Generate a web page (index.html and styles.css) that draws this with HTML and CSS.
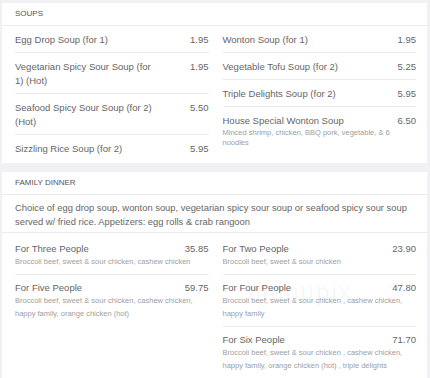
FILE: index.html
```html
<!DOCTYPE html>
<html>
<head>
<meta charset="utf-8">
<link rel="stylesheet" href="styles.css">
</head>
<body>
<div class="page">
  <section class="card soups">
    <div class="card-head">SOUPS</div>
    <div class="cols">
      <div class="col">
        <div class="item"><div class="row"><div class="name">Egg Drop Soup (for 1)</div><div class="price">1.95</div></div></div>
        <div class="item"><div class="row"><div class="name">Vegetarian Spicy Sour Soup (for 1) (Hot)</div><div class="price">1.95</div></div></div>
        <div class="item"><div class="row"><div class="name">Seafood Spicy Sour Soup (for 2) (Hot)</div><div class="price">5.50</div></div></div>
        <div class="item"><div class="row"><div class="name">Sizzling Rice Soup (for 2)</div><div class="price">5.95</div></div></div>
      </div>
      <div class="col">
        <div class="item"><div class="row"><div class="name">Wonton Soup (for 1)</div><div class="price">1.95</div></div></div>
        <div class="item"><div class="row"><div class="name">Vegetable Tofu Soup (for 2)</div><div class="price">5.25</div></div></div>
        <div class="item"><div class="row"><div class="name">Triple Delights Soup (for 2)</div><div class="price">5.95</div></div></div>
        <div class="item"><div class="row"><div class="name">House Special Wonton Soup</div><div class="price">6.50</div></div><div class="desc">Minced shrimp, chicken, BBQ pork, vegetable, &amp; 6 noodles</div></div>
      </div>
    </div>
  </section>
  <section class="card">
    <div class="card-head">FAMILY DINNER</div>
    <div class="intro">Choice of egg drop soup, wonton soup, vegetarian spicy sour soup or seafood spicy sour soup served w/ fried rice. Appetizers: egg rolls &amp; crab rangoon</div>
    <div class="cols family">
      <div class="col">
        <div class="item"><div class="row"><div class="name">For Three People</div><div class="price">35.85</div></div><div class="desc">Broccoli beef, sweet &amp; sour chicken, cashew chicken</div></div>
        <div class="item"><div class="row"><div class="name">For Five People</div><div class="price">59.75</div></div><div class="desc">Broccoli beef, sweet &amp; sour chicken, cashew chicken, happy family, orange chicken (hot)</div></div>
      </div>
      <div class="col">
        <div class="item"><div class="row"><div class="name">For Two People</div><div class="price">23.90</div></div><div class="desc">Broccoli beef, sweet &amp; sour chicken</div></div>
        <div class="item"><div class="row"><div class="name">For Four People</div><div class="price">47.80</div></div><div class="desc">Broccoli beef, sweet &amp; sour chicken , cashew chicken, happy family</div></div>
        <div class="item"><div class="row"><div class="name">For Six People</div><div class="price">71.70</div></div><div class="desc">Broccoli beef, sweet &amp; sour chicken , cashew chicken, happy family, orange chicken (hot) , triple delights</div></div>
      </div>
    </div>
  </section>
  <div class="watermark">menupix</div>
</div>
</body>
</html>
```
FILE: styles.css
```css
* { box-sizing: border-box; }
html, body { margin: 0; padding: 0; }
body {
  background: #f1f1f3;
  font-family: "Liberation Sans", Arial, sans-serif;
  color: #666;
  width: 430px;
  height: 378px;
  overflow: hidden;
}
.page {
  position: relative;
  display: flex;
  flex-direction: column;
  gap: 9px;
  padding: 3px 3px 0 2px;
}
.card {
  background: #fff;
}
.soups { padding-bottom: 2px; }
.card-head {
  font-size: 8px;
  line-height: 10px;
  color: #555;
  padding: 6px 13px 6px;
  border-bottom: 1px solid #ececee;
}
.cols {
  display: grid;
  grid-template-columns: 1fr 1fr;
  column-gap: 14px;
  padding: 0 11px 0 13px;
  align-items: start;
}
.item {
  padding: 7px 0 5px;
  border-bottom: 1px solid #ececee;
}
.col .item:last-child { border-bottom: none; }
.row {
  display: flex;
  justify-content: space-between;
  align-items: flex-start;
}
.name {
  max-width: 75%;
  font-size: 9.5px;
  line-height: 14px;
  color: #666;
}
.price {
  font-size: 9.5px;
  line-height: 14px;
  color: #666;
  flex: none;
}
.desc {
  font-size: 7.5px;
  line-height: 10px;
  color: #a0a0a0;
  padding-right: 8px;
}
.intro {
  font-size: 9.4px;
  line-height: 14px;
  color: #666;
  padding: 6px 6px 3px 13px;
  border-bottom: 1px solid #ececee;
}
.family { padding-top: 3px; }
.family .item { padding: 6px 0; }
.family .name, .family .price { line-height: 13px; max-width: none; }
.family .desc { line-height: 13px; }
.watermark {
  position: absolute;
  left: 248px;
  top: 278px;
  font-size: 24px;
  letter-spacing: 2px;
  color: rgba(0, 0, 0, 0.05);
  pointer-events: none;
}
```
